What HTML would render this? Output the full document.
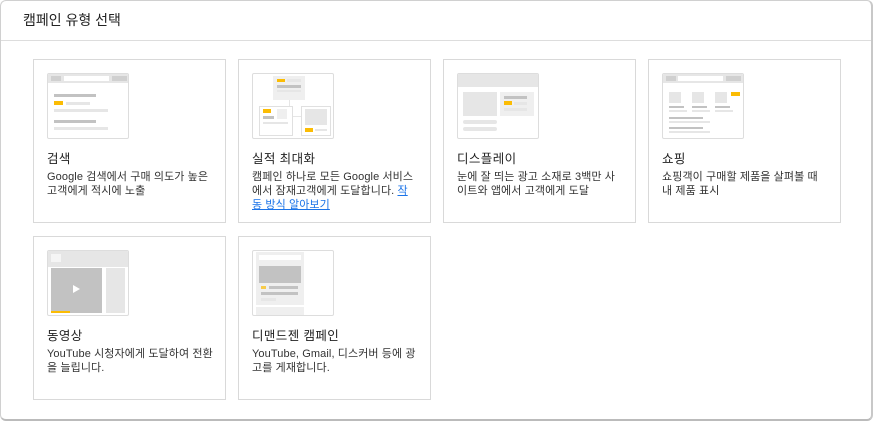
<!DOCTYPE html>
<html><head><meta charset="utf-8"><style>
*{box-sizing:border-box;margin:0;padding:0}
body{width:873px;height:421px;background:#fff;font-family:"Liberation Sans","Noto Sans CJK KR",sans-serif;position:relative;overflow:hidden}
.wrap{position:absolute;left:0;top:0;width:873px;height:421px;border:1px solid #d0d0d0;border-bottom:2px solid #bbb;border-right:2px solid #c8c8c8;border-radius:6px;background:#fff}
.hd{position:absolute;left:22px;top:9px;font-size:14px;color:#222}
.div{position:absolute;left:0;right:0;top:39px;border-top:1px solid #ddd}
.card{position:absolute;width:193px;height:164px;border:1px solid #d9d9d9;background:#fff}
.il{position:absolute;left:13px;top:13px;width:82px;height:66px;border:1px solid #ddd;border-radius:2px;background:#fff;overflow:hidden}
.il div{position:absolute}
.t{position:absolute;left:13px;top:88px;font-size:12.5px;color:#222;letter-spacing:.4px}
.d{position:absolute;left:13px;top:110px;white-space:nowrap;font-size:11px;line-height:14px;color:#333;letter-spacing:.1px}
.d a{color:#1a73e8;text-decoration:underline}
.g1{background:#e6e6e6}.g2{background:#c2c2c2}.g3{background:#efefef}.y{background:#fbbc04}.w{background:#fff}
</style></head><body>
<div class="wrap">
<div class="hd">캠페인 유형 선택</div>
<div class="div"></div>
</div>

<div class="card" style="left:33px;top:59px">
 <div class="il">
  <div class="g1" style="left:0;top:0;width:82px;height:9px"></div>
  <div class="w" style="left:16px;top:2px;width:45px;height:5px"></div>
  <div class="g2" style="left:64px;top:2px;width:15px;height:5px;opacity:.6"></div>
  <div class="g2" style="left:3px;top:2px;width:10px;height:5px;opacity:.6"></div>
  <div class="g2" style="left:6px;top:20px;width:42px;height:3px"></div>
  <div class="y" style="left:6px;top:27px;width:9px;height:4px"></div>
  <div class="g1" style="left:18px;top:28px;width:24px;height:3px"></div>
  <div class="g1" style="left:6px;top:35px;width:54px;height:3px"></div>
  <div class="g2" style="left:6px;top:46px;width:42px;height:3px"></div>
  <div class="g1" style="left:6px;top:53px;width:54px;height:3px"></div>
 </div>
 <div class="t">검색</div>
 <div class="d">Google 검색에서 구매 의도가 높은<br>고객에게 적시에 노출</div>
</div>

<div class="card" style="left:238px;top:59px">
 <div class="il">
  <div class="g3" style="left:20px;top:2px;width:32px;height:24px"></div>
  <div class="y" style="left:24px;top:5px;width:8px;height:3px"></div>
  <div class="g1" style="left:34px;top:5px;width:14px;height:3px"></div>
  <div class="g2" style="left:24px;top:11px;width:24px;height:3px"></div>
  <div class="g1" style="left:24px;top:16px;width:24px;height:2px"></div>
  <div class="g1" style="left:36px;top:26px;width:1px;height:7px"></div>
  <div style="left:6px;top:32px;width:34px;height:30px;border:1px solid #e0e0e0"></div>
  <div class="y" style="left:10px;top:35px;width:8px;height:4px"></div>
  <div class="g3" style="left:24px;top:35px;width:10px;height:10px"></div>
  <div class="g2" style="left:10px;top:42px;width:11px;height:3px"></div>
  <div class="g1" style="left:10px;top:48px;width:25px;height:2px"></div>
  <div class="g1" style="left:40px;top:42px;width:8px;height:1px"></div>
  <div style="left:48px;top:32px;width:30px;height:30px;border:1px solid #e0e0e0"></div>
  <div class="g1" style="left:52px;top:35px;width:22px;height:16px"></div>
  <div class="y" style="left:52px;top:54px;width:8px;height:4px"></div>
  <div class="g1" style="left:62px;top:55px;width:12px;height:2px"></div>
 </div>
 <div class="t">실적 최대화</div>
 <div class="d">캠페인 하나로 모든 Google 서비스<br>에서 잠재고객에게 도달합니다. <a>작</a><br><a>동 방식 알아보기</a></div>
</div>

<div class="card" style="left:443px;top:59px">
 <div class="il">
  <div class="g1" style="left:0;top:0;width:82px;height:13px"></div>
  <div class="g1" style="left:5px;top:18px;width:34px;height:24px"></div>
  <div class="g3" style="left:42px;top:18px;width:34px;height:24px"></div>
  <div class="g2" style="left:46px;top:22px;width:23px;height:3px"></div>
  <div class="y" style="left:46px;top:27px;width:8px;height:4px"></div>
  <div class="g1" style="left:56px;top:28px;width:13px;height:3px"></div>
  <div class="g1" style="left:46px;top:34px;width:23px;height:3px"></div>
  <div class="g1" style="left:5px;top:46px;width:34px;height:4px;border-radius:2px"></div>
  <div class="g1" style="left:5px;top:53px;width:34px;height:4px;border-radius:2px"></div>
 </div>
 <div class="t">디스플레이</div>
 <div class="d">눈에 잘 띄는 광고 소재로 3백만 사<br>이트와 앱에서 고객에게 도달</div>
</div>

<div class="card" style="left:648px;top:59px">
 <div class="il">
  <div class="g1" style="left:0;top:0;width:82px;height:9px"></div>
  <div class="w" style="left:15px;top:2px;width:45px;height:5px"></div>
  <div class="g2" style="left:63px;top:2px;width:15px;height:5px;opacity:.6"></div>
  <div class="g2" style="left:3px;top:2px;width:10px;height:5px;opacity:.6"></div>
  <div class="g1" style="left:6px;top:18px;width:12px;height:11px"></div>
  <div class="g1" style="left:29px;top:18px;width:12px;height:11px"></div>
  <div class="g1" style="left:52px;top:18px;width:12px;height:11px"></div>
  <div class="y" style="left:68px;top:18px;width:9px;height:4px"></div>
  <div class="g2" style="left:6px;top:32px;width:15px;height:2px"></div>
  <div class="g1" style="left:6px;top:36px;width:18px;height:2px"></div>
  <div class="g2" style="left:29px;top:32px;width:15px;height:2px"></div>
  <div class="g1" style="left:29px;top:36px;width:18px;height:2px"></div>
  <div class="g2" style="left:52px;top:32px;width:15px;height:2px"></div>
  <div class="g1" style="left:52px;top:36px;width:18px;height:2px"></div>
  <div class="g2" style="left:6px;top:43px;width:34px;height:2px"></div>
  <div class="g1" style="left:6px;top:47px;width:41px;height:2px"></div>
  <div class="g2" style="left:6px;top:53px;width:34px;height:2px"></div>
  <div class="g1" style="left:6px;top:57px;width:41px;height:2px"></div>
 </div>
 <div class="t">쇼핑</div>
 <div class="d">쇼핑객이 구매할 제품을 살펴볼 때<br>내 제품 표시</div>
</div>

<div class="card" style="left:33px;top:236px">
 <div class="il">
  <div class="g1" style="left:0;top:0;width:82px;height:16px"></div>
  <div style="left:3px;top:3px;width:10px;height:8px;background:#f5f5f5"></div>
  <div class="g2" style="left:3px;top:17px;width:51px;height:45px"></div>
  <div class="y" style="left:3px;top:60px;width:19px;height:2px"></div>
  <div class="g1" style="left:58px;top:17px;width:19px;height:45px"></div>
  <div style="left:25px;top:34px;width:0;height:0;border-left:7px solid #fff;border-top:4px solid transparent;border-bottom:4px solid transparent"></div>
 </div>
 <div class="t">동영상</div>
 <div class="d">YouTube 시청자에게 도달하여 전환<br>을 늘립니다.</div>
</div>

<div class="card" style="left:238px;top:236px">
 <div class="il">
  <div class="g3" style="left:3px;top:1px;width:48px;height:64px"></div>
  <div class="w" style="left:6px;top:4px;width:42px;height:5px"></div>
  <div class="g2" style="left:6px;top:15px;width:42px;height:17px"></div>
  <div class="y" style="left:8px;top:35px;width:5px;height:3px;opacity:.7"></div>
  <div class="g2" style="left:16px;top:35px;width:29px;height:3px"></div>
  <div class="g2" style="left:8px;top:41px;width:37px;height:3px"></div>
  <div class="g1" style="left:8px;top:47px;width:15px;height:3px"></div>
  <div class="w" style="left:3px;top:54px;width:48px;height:2px"></div>
 </div>
 <div class="t">디맨드젠 캠페인</div>
 <div class="d">YouTube, Gmail, 디스커버 등에 광<br>고를 게재합니다.</div>
</div>
</body></html>
